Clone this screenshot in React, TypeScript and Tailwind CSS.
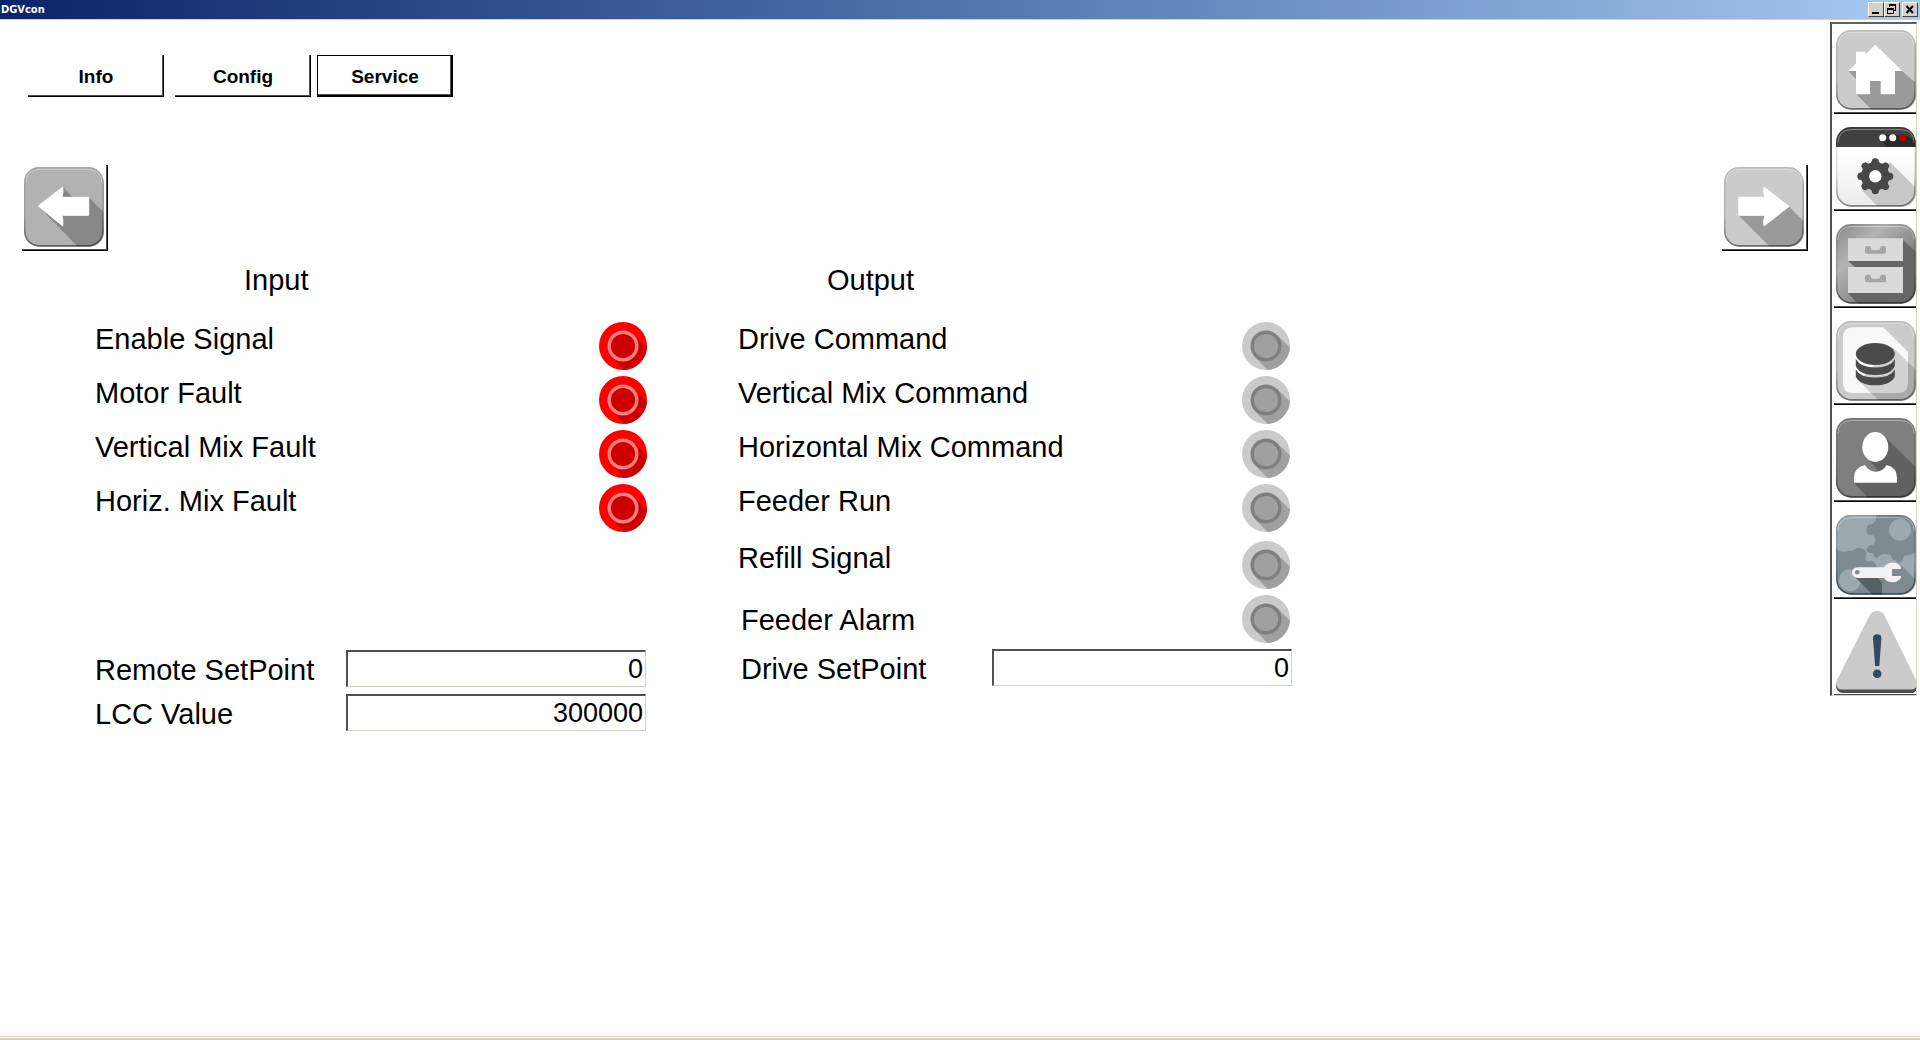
import { useState } from "react";
import type { ReactNode } from "react";

type TileProps = {
  id: string;
  fill: string;
  children: ReactNode;
};

// Rounded square with a bevel, shared by all picture buttons
function Tile({ id, fill, children }: TileProps) {
  return (
    <svg viewBox="0 0 80 80" className="block size-20" aria-hidden="true">
      <defs>
        <clipPath id={`${id}-clip`}>
          <rect width="79.5" height="79.5" rx="15" />
        </clipPath>
        <linearGradient id={`${id}-edge`} x1="0" y1="0" x2="0" y2="1">
          <stop offset="0" stopColor="#000" stopOpacity="0.08" />
          <stop offset="0.6" stopColor="#000" stopOpacity="0.12" />
          <stop offset="1" stopColor="#000" stopOpacity="0.45" />
        </linearGradient>
        <linearGradient id={`${id}-metal`} x1="0" y1="0" x2="1" y2="1">
          <stop offset="0" stopColor="#858585" />
          <stop offset="0.3" stopColor="#b4b4b4" />
          <stop offset="0.6" stopColor="#8a8a8a" />
          <stop offset="1" stopColor="#6c6c6c" />
        </linearGradient>
        <linearGradient id={`${id}-paper`} x1="0" y1="0" x2="0" y2="1">
          <stop offset="0.3" stopColor="#fff" />
          <stop offset="1" stopColor="#ececec" />
        </linearGradient>
      </defs>
      <rect x="1" y="2" width="79" height="78" rx="15" fill="#9d9d9d" />
      <g clipPath={`url(#${id}-clip)`}>
        <rect width="80" height="80" fill={fill} />
        {children}
      </g>
      <path
        d="M2 16Q2 2.5 16 2.5H64Q78 2.5 78 16"
        fill="none"
        stroke="#fff"
        strokeOpacity="0.35"
      />
      <rect
        x="0.8"
        y="0.8"
        width="78"
        height="78"
        rx="14.5"
        fill="none"
        stroke={`url(#${id}-edge)`}
        strokeWidth="1.6"
      />
    </svg>
  );
}

function ArrowLeftIcon() {
  return (
    <Tile id="prev" fill="#b2b2b2">
      <path d="M14.3 39 39 20 48.7 30.3H64.7L81 46.5V80H54Z" fill="#878787" />
      <path
        d="M14.3 39 38.7 20Q39.5 25 38 30.3H64.7V48.3H38Q39.5 54 38.7 59Z"
        fill="#fff"
        stroke="#fff"
        strokeLinejoin="round"
      />
    </Tile>
  );
}

function ArrowRightIcon() {
  return (
    <Tile id="next" fill="#cbcbcb">
      <path d="M14.3 48 46 80H80V54.5L65 39.5Z" fill="#9a9a9a" />
      <path
        d="M65 39.5 40 20Q39 25 41 30.3H14.8V48.3H41Q39 54 40 59Z"
        fill="#fff"
        stroke="#fff"
        strokeLinejoin="round"
      />
    </Tile>
  );
}

function HomeIcon() {
  return (
    <Tile id="home" fill="#cbcbcb">
      <path d="M12.3 41 20 49V64L36 80H80V53L66 41Z" fill="#9a9a9a" />
      <path
        d="M12.3 41 20 33.5V21.7H29.3V24.4L39.3 14.7 66.3 41H59V64.3H44.7V51H34V64.3H20V41Z"
        fill="#fff"
      />
    </Tile>
  );
}

function SettingsIcon() {
  const teeth = [0, 45, 90, 135, 180, 225, 270, 315];

  return (
    <Tile id="settings" fill="url(#settings-paper)">
      <path d="M54 35 81 62V80H42L26 63.5Z" fill="#c8c8c8" />
      <path d="M0 0H80V20H0Z" fill="#414141" />
      <path d="M49 8 61 20H80V14L69 8Z" fill="#2a2a2a" />
      <path d="M44 13 51 20H62L53 11Z" fill="#2a2a2a" />
      <circle cx="46.7" cy="10.7" r="3.5" fill="#fff" />
      <circle cx="56.7" cy="10.7" r="3.5" fill="#fff" />
      <circle cx="66.7" cy="10.7" r="3.5" fill="#b80000" />
      <g fill="#474747">
        {teeth.map((angle) => (
          <path
            key={angle}
            d="M33.5 37Q36 36 36.2 32.5Q39.3 30 42.4 32.5Q42.6 36 45 37V44H33.5Z"
            transform={`rotate(${angle} 39.3 49.3)`}
          />
        ))}
      </g>
      <circle cx="39.3" cy="49.3" r="10" fill="none" stroke="#474747" strokeWidth="8" />
      <circle cx="39.3" cy="49.3" r="6.2" fill="#fff" />
    </Tile>
  );
}

function ArchiveIcon() {
  return (
    <Tile id="archive" fill="url(#archive-metal)">
      <path d="M67 16 80 28V80H22L12 69H67V43H19L12 37H67Z" fill="#666" />
      <path d="M12 14.3H67V37H12ZM12 43H67V69H12Z" fill="#dadada" />
      <path
        d="M31 22H33.5Q35 22 35 24.5Q35 26 37 26H42.5Q44 26 44 24.5Q44 22 46 22H48Q50 22 50 24V27.7Q50 29.7 48 29.7H31Q29 29.7 29 27.7V24Q29 22 31 22ZM31 50.7H33.5Q35 50.7 35 53.2Q35 54.7 37 54.7H42.5Q44 54.7 44 53.2Q44 50.7 46 50.7H48Q50 50.7 50 52.7V56.3Q50 58.3 48 58.3H31Q29 58.3 29 56.3V52.7Q29 50.7 31 50.7Z"
        fill="#a5a5a5"
      />
    </Tile>
  );
}

function DatabaseIcon() {
  return (
    <Tile id="database" fill="#cbcbcb">
      <path
        d="M17 6.3H47.3L72 31V62Q72 72 62 72H17Q7 72 7 62V16.3Q7 6.3 17 6.3Z"
        fill="#f9f9f9"
      />
      <path d="M55.7 25.5 81 50V80H43.5L23 60.5Z" fill="#000" fillOpacity="0.16" />
      <g fill="#4a4a4a">
        <ellipse cx="39.3" cy="33" rx="19.5" ry="11" />
        <path d="M19.8 38Q24 46.5 39.3 46.5T58.8 38V45Q55 54 39.3 54T19.8 45Z" />
        <path d="M19.8 48.5Q24 56.5 39.3 56.5T58.8 48.5V55.5Q55 64.3 39.3 64.3T19.8 55.5Z" />
      </g>
    </Tile>
  );
}

function UserIcon() {
  return (
    <Tile id="user" fill="#7f7f7f">
      <path d="M50 20 81 50.5V80H32L18 64.7 42 52 30 39Z" fill="#616161" />
      <ellipse cx="39.3" cy="29" rx="13" ry="15" fill="#fff" />
      <path
        d="M29 47Q33 53.7 39.8 53.7T50.7 47Q61 49.5 61 60V64.7H18V60Q18 49.5 29 47Z"
        fill="#fff"
      />
    </Tile>
  );
}

function MaintenanceIcon() {
  return (
    <Tile id="maintenance" fill="#7e8a90">
      <path
        d="M0 0H40.3Q40 8 36 9Q31 9 30.3 13.7Q30 19 34 19.5Q39 20 39.3 25Q39 30 34 30.5Q30.5 31 31 36Q32 38 36 38Q38 39 38.5 42Q42 44 44 40Q46.7 38 54.3 39.7Q56 45 58.7 45.3L62.7 47.7 66.7 46.3Q66 42 69.3 40.3Q75 41 80 37V65L66 51 48 53.7H41Q40 47 36 46.3Q30 47 29.3 43.7Q32 36 27.7 34.3Q25 32 21 33Q18 36 12.7 36Q5 38 0 33.5Z"
        fill="#9caab0"
      />
      <circle cx="64" cy="14.7" r="11" fill="#9caab0" />
      <circle cx="14" cy="65.3" r="11" fill="#9caab0" />
      <path d="M19 62 37 80H46V68L41 62Z" fill="#566065" />
      <path
        d="M21.3 52.3H48Q51 47.6 56.5 47.6Q62 47.6 65 52.5V54H56V61H65V62.5Q62 67.3 56.5 67.3Q51 67.3 48 62.9H21.3A5.3 5.3 0 0 1 21.3 52.3Z"
        fill="#f2f2f2"
      />
      <circle cx="21.3" cy="57.3" r="2.3" fill="#7e8a90" />
    </Tile>
  );
}

function AlarmIcon() {
  return (
    <svg viewBox="0 0 80 82" className="block h-[82px] w-20" aria-hidden="true">
      <path d="M0 72V76Q2 82 7 82H75Q80 82 81 76V72Z" fill="#4d4d4d" />
      <path
        d="M33.5 4.5Q36 0 41 0T48.5 4.5L80.5 70Q82 78.5 75 78.5H6Q-1 78.5 0.5 70Z"
        fill="#cbcbcb"
      />
      <path d="M37 27.5Q37 23.3 41.2 23.3T45.4 27.5L43.3 55H39.1Z" fill="#34495e" />
      <circle cx="41.2" cy="62.7" r="4.3" fill="#34495e" />
    </svg>
  );
}

function Led({ on }: { on: boolean }) {
  return (
    <svg viewBox="0 0 48 48" className="size-12 shrink-0" aria-hidden="true">
      <circle cx="24" cy="24" r="24" fill={on ? "#ff0000" : "#cacaca"} />
      <path
        d="M35.1 12.9 47.9 25.6A24 24 0 0 1 25.6 47.9L12.9 35.1Z"
        fill={on ? "#cc0000" : "#a0a0a0"}
      />
      <circle
        cx="24"
        cy="24"
        r="13.8"
        fill={on ? "#cc0000" : "#a0a0a0"}
        stroke={on ? "#ff8080" : "#7f7f7f"}
        strokeWidth="3.4"
      />
    </svg>
  );
}

function SignalRow({ label, on }: { label: string; on: boolean }) {
  return (
    <li className="flex h-[54px] items-start justify-between">
      <span>{label}</span>
      <Led on={on} />
    </li>
  );
}

function ValueRow({ id, label, value }: { id: string; label: string; value: string }) {
  return (
    <div className="flex items-center justify-between">
      <label htmlFor={id} className="pt-0.5">
        {label}
      </label>
      <input
        id={id}
        type="text"
        defaultValue={value}
        className="h-[37px] w-75 border border-t-2 border-l-2 border-t-[#505050] border-r-[#d4d0c8] border-b-[#d4d0c8] border-l-[#505050] bg-white pr-0.5 text-right text-[27px] outline-none"
      />
    </div>
  );
}

const inputs = ["Enable Signal", "Motor Fault", "Vertical Mix Fault", "Horiz. Mix Fault"];

const outputs = [
  "Drive Command",
  "Vertical Mix Command",
  "Horizontal Mix Command",
  "Feeder Run",
];

const sideItems = [
  { name: "Home", icon: <HomeIcon /> },
  { name: "Settings", icon: <SettingsIcon /> },
  { name: "Archive", icon: <ArchiveIcon /> },
  { name: "Database", icon: <DatabaseIcon /> },
  { name: "User", icon: <UserIcon /> },
  { name: "Maintenance", icon: <MaintenanceIcon /> },
  { name: "Alarms", icon: <AlarmIcon /> },
];

const raised = "shadow-[inset_-1px_-1px_0_#000,inset_-2px_-2px_0_#505050]";

const tabBase = "h-[42px] w-[136px] pt-0.5 text-[19px] font-bold";
const tabActive = "border border-black";

const captionButton =
  "flex h-[15px] w-4 items-center justify-center border border-t-white border-l-white border-r-[#404040] border-b-[#404040] bg-[#d4d0c8]";

export default function App() {
  const [tab, setTab] = useState("Service");

  const tabClass = (name: string) =>
    `${tabBase} ${raised} ${tab === name ? tabActive : ""}`;

  return (
    <div className="flex min-h-screen flex-col bg-white font-['Liberation_Sans',Arial,sans-serif] text-black">

      {/* TITLE BAR */}
      <header className="flex h-5 items-center justify-between border-b border-[#d4d0c8] bg-linear-to-r from-[#0a246a] to-[#a6caf0] pr-0.5 pl-px">
        <h1 className="pt-0.5 font-['DejaVu_Sans_Condensed','DejaVu_Sans',sans-serif] text-[11px] font-bold text-white">
          DGVcon
        </h1>

        <div className="flex">
          <button type="button" aria-label="Minimize" className={captionButton}>
            <svg viewBox="0 0 12 11" className="h-[11px] w-3">
              <path d="M2 8H9V10H2Z" />
            </svg>
          </button>
          <button type="button" aria-label="Restore" className={captionButton}>
            <svg viewBox="0 0 12 11" className="h-[11px] w-3" shapeRendering="crispEdges">
              <path d="M3 0H10V7H8V6H9V2H4V3H3ZM1 4H8V10H1ZM2 6V9H7V6Z" fillRule="evenodd" />
            </svg>
          </button>
          <button type="button" aria-label="Close" className={`${captionButton} ml-0.5`}>
            <svg viewBox="0 0 12 11" className="h-[11px] w-3">
              <path d="M2.5 2 9 9M9 2 2.5 9" stroke="#000" strokeWidth="2" />
            </svg>
          </button>
        </div>
      </header>

      <div className="flex flex-1 items-start justify-between pt-0.5 pr-[3px]">

        <main className="flex-1 pt-[33px] pr-[22px] pl-[22px]">

          {/* TABS */}
          <nav className="flex pl-1.5">
            <button type="button" className={tabClass("Info")} onClick={() => setTab("Info")}>
              Info
            </button>
            <button
              type="button"
              className={`${tabClass("Config")} ml-[11px]`}
              onClick={() => setTab("Config")}
            >
              Config
            </button>
            <button
              type="button"
              className={`${tabClass("Service")} ml-1.5`}
              onClick={() => setTab("Service")}
            >
              Service
            </button>
          </nav>

          {/* PAGE ARROWS */}
          <div className="mt-[68px] flex justify-between">
            <button
              type="button"
              aria-label="Previous page"
              className={`size-[86px] pb-0.5 pl-0.5 ${raised}`}
            >
              <ArrowLeftIcon />
            </button>
            <button
              type="button"
              aria-label="Next page"
              className={`size-[86px] pb-0.5 pl-0.5 ${raised}`}
            >
              <ArrowRightIcon />
            </button>
          </div>

          {/* SIGNALS */}
          <div className="mt-3 grid grid-cols-[552fr_554fr_425fr] gap-x-[91px] pl-[73px] text-[29px] leading-[34px]">

            <section>
              <h2 className="mb-[25px] pl-[149px]">Input</h2>
              <ul className="mb-28">
                {inputs.map((label) => (
                  <SignalRow key={label} label={label} on />
                ))}
              </ul>
              <div className="flex flex-col gap-[7px] pr-px">
                <ValueRow id="remote" label="Remote SetPoint" value="0" />
                <ValueRow id="lcc" label="LCC Value" value="300000" />
              </div>
            </section>

            <section>
              <h2 className="mb-[25px] pl-[89px]">Output</h2>
              <ul className="pr-0.5">
                {outputs.map((label) => (
                  <SignalRow key={label} label={label} on={false} />
                ))}
              </ul>
              <ul className="mt-[3px] pr-0.5">
                <SignalRow label="Refill Signal" on={false} />
                <li className="flex h-[54px] items-start justify-between pl-[3px]">
                  <span className="pt-2">Feeder Alarm</span>
                  <Led on={false} />
                </li>
              </ul>
              <div className="pl-[3px]">
                <ValueRow id="drive" label="Drive SetPoint" value="0" />
              </div>
            </section>

          </div>

        </main>

        {/* SIDE MENU */}
        <aside className="border-t-2 border-r border-b border-l-2 border-t-[#606060] border-r-[#d4d0c8] border-b-[#d4d0c8] border-l-[#505050] pt-1 pl-0.5">
          <ul className="flex flex-col gap-[11px]">
            {sideItems.map((item) => (
              <li key={item.name} className="overflow-hidden last:h-[85px]">
                <button
                  type="button"
                  aria-label={item.name}
                  className="block h-[86px] pb-0.5 pl-0.5 shadow-[inset_0_-1px_0_#000,inset_0_-2px_0_#505050]"
                >
                  {item.icon}
                </button>
              </li>
            ))}
          </ul>
        </aside>

      </div>

      {/* STATUS STRIP */}
      <footer className="h-1 border-t border-b-2 border-[#d4d0c8]" />

    </div>
  );
}
